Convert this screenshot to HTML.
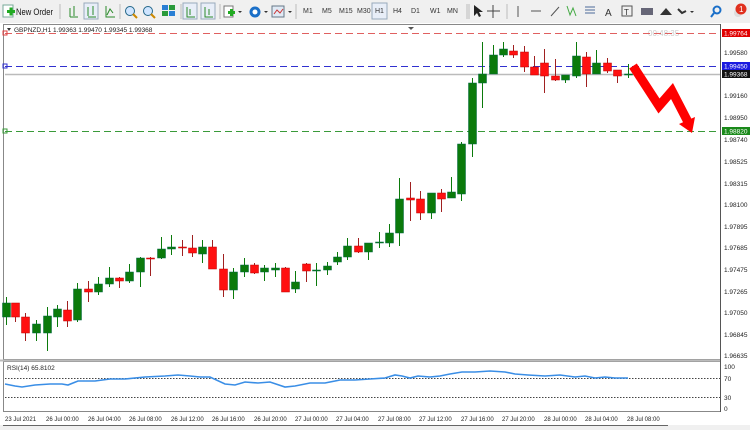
<!DOCTYPE html>
<html><head><meta charset="utf-8"><style>
body{margin:0;width:750px;height:430px;overflow:hidden;background:#fff;font-family:"Liberation Sans",sans-serif;}
#tb{position:absolute;left:0;top:0;width:750px;height:23px;background:#f0f0f0;border-bottom:1px solid #d8d8d8;}
.t{position:absolute;font-size:7px;color:#333;top:8px}
svg text{font-family:"Liberation Sans",sans-serif;}
</style></head><body>
<div id="tb">
<svg width="750" height="23" style="position:absolute;left:0;top:0">
<rect x="3" y="5" width="10" height="12" fill="#fff" stroke="#7a9" stroke-width="1"/>
<rect x="7" y="10" width="8" height="3" fill="#2a2"/><rect x="9.5" y="7.5" width="3" height="8" fill="#2a2"/>
<text x="16" y="15" font-size="9" fill="#111" textLength="37" lengthAdjust="spacingAndGlyphs">New Order</text>
<line x1="60" y1="4" x2="60" y2="19" stroke="#bbb"/>
<g stroke="#2a8a2a" fill="none"><path d="M70 8v9M74 6v10M70 17h8"/><rect x="84" y="3" width="14" height="16" stroke="#9ab" fill="#e8eef8"/><path d="M88 7v9M93 6v9M88 17h8"/><path d="M106 6v11h9M107 15l3-6 3 4"/></g>
<line x1="120" y1="4" x2="120" y2="19" stroke="#bbb"/>
<circle cx="130" cy="11" r="4.5" fill="#cfe5ff" stroke="#268"/><line x1="133" y1="14" x2="137" y2="18" stroke="#c80" stroke-width="2"/>
<circle cx="148" cy="11" r="4.5" fill="#cfe5ff" stroke="#268"/><line x1="151" y1="14" x2="155" y2="18" stroke="#c80" stroke-width="2"/>
<rect x="162" y="5" width="6" height="5" fill="#2a7fd4"/><rect x="169" y="5" width="6" height="5" fill="#2a9a3a"/><rect x="162" y="11" width="6" height="5" fill="#2a9a3a"/><rect x="169" y="11" width="6" height="5" fill="#2a7fd4"/>
<line x1="181" y1="4" x2="181" y2="19" stroke="#bbb"/>
<rect x="183" y="3" width="14" height="16" fill="#e8eef8" stroke="#9ab"/><path d="M187 7v10h8M190 9v6" stroke="#2a8a2a" fill="none"/>
<rect x="201" y="3" width="14" height="16" fill="#e8eef8" stroke="#9ab"/><path d="M205 7v10h8M209 9v6" stroke="#2a8a2a" fill="none"/>
<line x1="220" y1="4" x2="220" y2="19" stroke="#bbb"/>
<rect x="224" y="6" width="9" height="11" fill="#fff" stroke="#777"/><rect x="228" y="11" width="7" height="3" fill="#2a2"/><rect x="230" y="9" width="3" height="7" fill="#2a2"/>
<path d="M238 11l2 2 2-2z" fill="#333"/>
<circle cx="255" cy="12" r="5.5" fill="#1a6fc8"/><circle cx="255" cy="12" r="2.5" fill="#fff"/><path d="M264 11l2 2 2-2z" fill="#333"/>
<rect x="272" y="6" width="12" height="11" fill="#e0eaf5" stroke="#678"/><path d="M274 14l3-4 3 3 3-4" stroke="#c33" fill="none"/><path d="M288 11l2 2 2-2z" fill="#333"/>
<line x1="296" y1="4" x2="296" y2="19" stroke="#bbb"/>
<rect x="372" y="3" width="15" height="16" fill="#e8eef8" stroke="#9ab"/>
<line x1="467" y1="4" x2="467" y2="19" stroke="#bbb"/><line x1="469" y1="4" x2="469" y2="19" stroke="#bbb"/>
<path d="M474 5v11l3-3 2 4 2-1-2-4h4z" fill="#222"/>
<path d="M493 5v13M487 11h13" stroke="#444"/>
<line x1="507" y1="4" x2="507" y2="19" stroke="#bbb"/>
<path d="M518 6v11M531 11h10M551 16l8-9" stroke="#555"/>
<path d="M567 6l3 9 3-7 3 8" stroke="#4a4" fill="none"/>
<path d="M585 7h10M585 10h10M585 13h10" stroke="#4c6a9a"/>
<text x="605" y="16" font-size="10" fill="#333">A</text>
<rect x="622" y="6" width="10" height="10" fill="none" stroke="#555"/><text x="624" y="15" font-size="8" fill="#333">T</text>
<rect x="641" y="8" width="12" height="7" fill="#667"/>
<path d="M660 15l6-7 6 7z" fill="#333"/>
<path d="M678 9l4 4 4-2" stroke="#333" fill="none" stroke-width="2"/><path d="M690 11l2 2 2-2z" fill="#333"/>
<circle cx="717" cy="10" r="3.5" fill="none" stroke="#1a6fc8" stroke-width="2"/><line x1="714" y1="13" x2="711" y2="17" stroke="#1a6fc8" stroke-width="2"/>
<circle cx="738" cy="13" r="4" fill="#ddd"/><circle cx="741" cy="9" r="5.5" fill="#e0301e"/><text x="739" y="12" font-size="8" fill="#fff">1</text>
</svg>
<span class="t" style="left:303px">M1</span><span class="t" style="left:322px">M5</span><span class="t" style="left:339px">M15</span><span class="t" style="left:357px">M30</span>
<span class="t" style="left:375px">H1</span><span class="t" style="left:393px">H4</span><span class="t" style="left:411px">D1</span><span class="t" style="left:430px">W1</span><span class="t" style="left:447px">MN</span>
</div>
<svg id="ch" width="750" height="407" style="position:absolute;left:0;top:23px" viewBox="0 23 750 407">
<rect x="0" y="23" width="750" height="407" fill="#fff"/>
<rect x="3.5" y="24.5" width="717" height="335" fill="none" stroke="#888"/>
<rect x="3.5" y="361.5" width="717" height="50" fill="none" stroke="#888"/>
<line x1="720.5" y1="24" x2="720.5" y2="412" stroke="#555"/>
<line x1="0" y1="360.5" x2="720" y2="360.5" stroke="#bbb" stroke-width="2"/>
<path d="M7 28l2 3 2-3z" fill="#333"/>
<text x="14" y="32" font-size="6.5" fill="#222">GBPNZD,H1  1.99363 1.99470 1.99345 1.99368</text>
<text x="648" y="36" font-size="8" fill="#ccc">00:48:35</text>
<path d="M408 27l3 3 3-3z" fill="#555"/>
<line x1="5" y1="33.5" x2="720" y2="33.5" stroke="#e06060" stroke-dasharray="7,4"/>
<line x1="5" y1="66.5" x2="720" y2="66.5" stroke="#3030d0" stroke-dasharray="7,4"/>
<line x1="5" y1="74.5" x2="720" y2="74.5" stroke="#bbb" stroke-width="1.5"/>
<line x1="5" y1="131.5" x2="720" y2="131.5" stroke="#3a9a3a" stroke-dasharray="7,4"/>
<rect x="3" y="31" width="4" height="4" fill="none" stroke="#e04040"/><rect x="3" y="64" width="4" height="4" fill="none" stroke="#3030d0"/><rect x="3" y="129" width="4" height="4" fill="none" stroke="#3a9a3a"/>
<g id="candles"></g>
<path d="M633 66 L659 106 L672 91 L688 122" stroke="#ff0000" stroke-width="9" fill="none" stroke-linejoin="miter"/>
<path d="M679 124 L695 117 L692 133z" fill="#ff0000"/>
<g font-size="6.5" fill="#222">
<text x="724" y="55">1.99580</text><text x="724" y="98">1.99160</text><text x="724" y="120">1.98950</text><text x="724" y="142">1.98740</text>
<text x="724" y="164">1.98525</text><text x="724" y="186">1.98315</text><text x="724" y="207">1.98100</text><text x="724" y="229">1.97895</text>
<text x="724" y="250">1.97685</text><text x="724" y="272">1.97475</text><text x="724" y="294">1.97265</text><text x="724" y="315">1.97050</text>
<text x="724" y="337">1.96845</text><text x="724" y="358">1.96635</text>
<text x="724" y="369">100</text><text x="724" y="381">70</text><text x="724" y="400">30</text><text x="724" y="411">0</text>
</g>
<g font-size="6.5">
<rect x="722" y="29" width="28" height="8" fill="#e00000"/><text x="724" y="35.5" fill="#fff">1.99764</text>
<rect x="722" y="62" width="28" height="8" fill="#1a1ae0"/><text x="724" y="68.5" fill="#fff">1.99450</text>
<rect x="722" y="70" width="28" height="8" fill="#111"/><text x="724" y="76.5" fill="#fff">1.99368</text>
<rect x="722" y="127" width="28" height="8" fill="#1a8a1a"/><text x="724" y="133.5" fill="#fff">1.98820</text>
</g>
<text x="7" y="370" font-size="6.5" fill="#222">RSI(14) 65.8102</text>
<line x1="5" y1="378.5" x2="720" y2="378.5" stroke="#444" stroke-dasharray="1.5,1.5"/>
<line x1="5" y1="397.5" x2="720" y2="397.5" stroke="#444" stroke-dasharray="1.5,1.5"/>
<polyline fill="none" stroke="#3a8ee6" stroke-width="1.6" points="5,384 15,386 22,387 35,385 50,384 62,384 68,385 78,381 95,381 110,379 125,379 145,377 165,376 178,375 190,376 200,377 210,377 225,384 235,385 245,382 258,383 270,382 285,387 295,386 310,383 325,383 340,380 355,380 370,379 385,378 395,375 402,376 410,378 418,376 430,377 440,376 450,374 462,372 475,372 490,371 505,372 515,374 528,375 545,376 560,375 575,377 585,376 595,378 605,377 615,378 628,378"/>
<g font-size="6" fill="#222">
<text x="5" y="421">23 Jul 2021</text><text x="46" y="421">26 Jul 00:00</text><text x="88" y="421">26 Jul 04:00</text><text x="129" y="421">26 Jul 08:00</text>
<text x="171" y="421">26 Jul 12:00</text><text x="212" y="421">26 Jul 16:00</text><text x="254" y="421">26 Jul 20:00</text><text x="295" y="421">27 Jul 00:00</text>
<text x="336" y="421">27 Jul 04:00</text><text x="378" y="421">27 Jul 08:00</text><text x="419" y="421">27 Jul 12:00</text><text x="461" y="421">27 Jul 16:00</text>
<text x="502" y="421">27 Jul 20:00</text><text x="544" y="421">28 Jul 00:00</text><text x="585" y="421">28 Jul 04:00</text><text x="627" y="421">28 Jul 08:00</text>
</g>
<rect x="0" y="425" width="750" height="5" fill="#f0f0f0"/>
<line x1="3" y1="425.5" x2="668" y2="425.5" stroke="#666"/>
</svg>
<script>
var d=[[6,303,317,297,325,'g'],[15,303,317,303,322,'r'],[25,317,333,313,341,'r'],[36,324,333,320,341,'g'],[47,316,333,307,351,'g'],[57,309,317,305,327,'g'],[67,310,321,301,327,'r'],[77,289,320,283,322,'g'],[88,289,292,281,302,'r'],[98,284,292,277,295,'g'],[109,278,284,267,287,'g'],[119,278,281,277,288,'r'],[129,272,281,264,283,'g'],[140,258,272,257,287,'g'],[150,258,259,257,276,'r'],[161,249,258,237,259,'g'],[171,247,249,235,255,'g'],[182,247,248,240,256,'r'],[192,248,253,235,257,'r'],[202,247,254,240,263,'g'],[212,247,269,240,269,'r'],[223,269,290,254,297,'r'],[233,272,290,268,299,'g'],[244,265,272,258,277,'g'],[254,265,273,263,274,'r'],[264,268,272,265,281,'g'],[275,268,270,263,277,'g'],[285,268,292,267,292,'r'],[295,282,289,271,293,'g'],[306,264,271,263,282,'r'],[316,270,271,263,286,'g'],[327,266,270,262,275,'g'],[337,257,262,252,265,'g'],[347,246,257,238,260,'g'],[358,246,252,238,253,'r'],[368,243,252,243,260,'g'],[379,242,243,232,248,'g'],[389,233,243,224,247,'g'],[399,199,233,178,246,'g'],[410,198,200,182,221,'r'],[420,199,213,191,220,'r'],[431,193,213,193,219,'g'],[441,193,199,189,212,'r'],[451,192,198,177,198,'g'],[461,144,194,142,201,'g'],[472,83,144,78,157,'g'],[482,74,83,42,108,'g'],[493,55,74,45,74,'g'],[503,49,55,42,57,'g'],[513,51,55,45,58,'r'],[524,52,67,46,72,'r'],[534,67,75,56,75,'r'],[544,63,76,49,93,'r'],[555,76,80,59,81,'r'],[565,75,80,75,83,'g'],[576,56,76,42,78,'g'],[586,57,74,52,87,'r'],[596,63,74,50,74,'g'],[607,63,71,58,73,'r'],[617,70,76,70,83,'r'],[628,74,75,64,78,'g']];
var s='';d.forEach(function(c){var col=c[5]=='g'?'#0b7a0b':'#ff1010',w=c[5]=='g'?'#0b7a0b':'#a02020';
s+='<line x1="'+(c[0]+.5)+'" y1="'+c[3]+'" x2="'+(c[0]+.5)+'" y2="'+c[4]+'" stroke="'+w+'"/>';
s+='<rect x="'+(c[0]-3.5)+'" y="'+c[1]+'" width="8" height="'+Math.max(1,c[2]-c[1])+'" fill="'+col+'" stroke="'+(c[5]=='g'?'#064':'#b00')+'" stroke-width=".5"/>';});
document.getElementById('candles').innerHTML=s;
</script>
</body></html>
